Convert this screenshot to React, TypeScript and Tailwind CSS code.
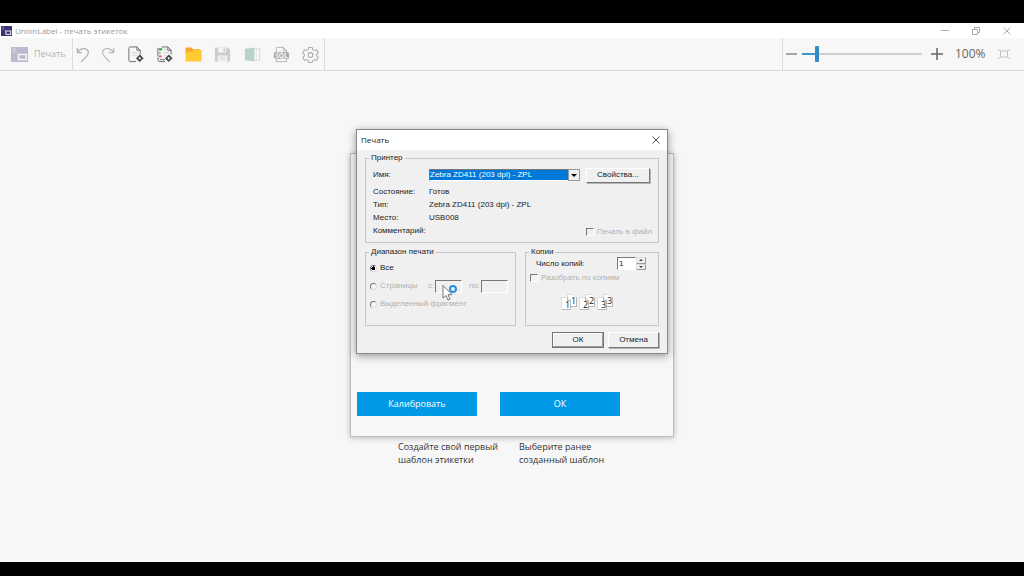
import type { ReactNode } from "react";

function AppMark({ className }: { className: string }) {
  return (
    <svg viewBox="0 0 18 18" preserveAspectRatio="none" className={className} aria-hidden="true">
      <rect width="18" height="18" fill="#3d3270" />
      <path d="M2 2h3v3H2zM0 7h8" fill="#7d75a5" stroke="#6c6399" strokeWidth="1" />
      <rect x="8" y="9" width="8" height="6" fill="#3d3270" stroke="#fff" strokeWidth="1.6" />
    </svg>
  );
}

function Tool({ label, className, children }: { label: string; className: string; children: ReactNode }) {
  return (
    <button type="button" aria-label={label} className={`flex h-8 items-center justify-center ${className}`}>
      <svg width="17" height="17" viewBox="0 0 18 18" fill="none" className="shrink-0" aria-hidden="true">
        {children}
      </svg>
    </button>
  );
}

function Toolbar() {
  return (
    <div className="flex h-[33px] shrink-0 items-stretch border-b border-[#dcdcdc] bg-[#f7f7f7]">
      <button type="button" className="flex w-[72px] items-center gap-[6px] pl-[11px] text-[9px] text-[#b4b4b8]">
        <AppMark className="h-[15px] w-[17px] shrink-0 opacity-30" />
        Печать
      </button>
      <div className="flex border-x border-[#dcdcdc]">
        <Tool label="Отменить" className="w-[20px]">
          <path d="M2.500 2v5h5M2.500 7C5 2.500 12 1 14 5.500C15.500 9.500 10 13 6.500 17" stroke="#b0b0b0" strokeWidth="1.3" />
        </Tool>
        <Tool label="Повторить" className="w-[28px]">
          <path d="M15.500 2v5h-5M15.500 7C13 2.500 6 1 4 5.500C2.500 9.500 8 13 11.500 17" stroke="#bcbcbc" strokeWidth="1.3" />
        </Tool>
        <Tool label="Новый шаблон" className="w-[28px]">
          <path d="M9.500 16.500H3.500Q2 16.500 2 15V2.500Q2 1 3.500 1H10.500L14 4.500V9M10.500 1V4.500H14" stroke="#666" />
          <path d="M5 7h6M5 9.500h6" stroke="#d5d5d5" />
          <path d="M13.500 9.500l3.500 3.500-3.500 3.500L10 13z" fill="#444" stroke="#444" strokeLinejoin="round" />
          <circle cx="13.500" cy="13" r="1.200" fill="#fff" />
        </Tool>
        <Tool label="Новая серия" className="w-[30px]">
          <path d="M9.500 14.500H5Q4 14.500 4 13.500M2 12V14.500Q2 16.500 4 16.500H9.500M6 1H12.500L16 4.500V9M12.500 1V4.500H16M2 2V11" stroke="#666" />
          <path d="M3 3.500h3.500" stroke="#39b54a" strokeWidth="2.500" />
          <path d="M3 7.500h2" stroke="#7ccf86" strokeWidth="2" />
          <path d="M3 11h3" stroke="#ee5555" strokeWidth="2" />
          <path d="M8.500 4h3M7.500 7h6M8.500 10h2" stroke="#ccc" />
          <path d="M13.500 9.500l3.500 3.500-3.500 3.500L10 13z" fill="#444" stroke="#444" strokeLinejoin="round" />
          <circle cx="13.500" cy="13" r="1.200" fill="#fff" />
        </Tool>
        <Tool label="Открыть" className="w-[29px]">
          <path d="M.5 2.500Q.5 1.500 1.500 1.500H7L8.500 3.500H16V8H.5z" fill="#f6a62d" />
          <path d="M.5 6H7.500L9 4H16.500Q17.500 4 17.500 5V15.500Q17.500 16.500 16.500 16.500H1.500Q.5 16.500 .5 15.500z" fill="#fecb35" />
        </Tool>
        <Tool label="Сохранить" className="w-[29px]">
          <path d="M1 1.500H14.500L17 4V16.500H1z" fill="#cbced0" />
          <path d="M4.500 1.500H13V7H4.500zM4 10H14V16.500H4z" fill="#f5f5f5" />
          <path d="M10 2.500h2V6h-2z" fill="#c8cccd" />
          <path d="M5.500 12h7M5.500 14h7" stroke="#d5d8d8" />
        </Tool>
        <Tool label="Таблица" className="w-[30px]">
          <path d="M10 3h6.500v12H10" fill="#f8f8f8" stroke="#cddbd5" />
          <path d="M13 3.500v11" stroke="#e0e8e4" />
          <path d="M1 3L11 1.500V16.500L1 15z" fill="#b9d3c8" />
        </Tool>
        <Tool label="База данных SQL" className="w-[29px]">
          <path d="M3.500 7V2.500Q3.500 1.500 4.500 1.500H11L14.500 5V7M11 1.500V5H14.500M3.500 13V16.500H14.500V13" stroke="#b3b3b3" />
          <rect x="1" y="6.500" width="16" height="7" rx="1.500" fill="#a9a9a9" />
          <text x="9" y="12.500" textAnchor="middle" fontSize="7" fontWeight="700" fill="#f7f7f7" fontFamily="Open Sans, sans-serif">SQL</text>
        </Tool>
        <Tool label="Настройки" className="w-[28px]">
          <path d="M7.200 1.500h3.600l.6 2.300 1.700 1 2.300-.7 1.800 3.100-1.700 1.700v1.500l1.700 1.600-1.800 3.100-2.300-.6-1.700 1-.6 1.900H7.200l-.6-1.900-1.700-1-2.300.6L.8 12l1.700-1.600V8.900L.8 7.200l1.800-3.100 2.300.7 1.700-1z" stroke="#ababab" strokeLinejoin="round" strokeWidth="1.100" />
          <circle cx="9" cy="9.500" r="2.500" stroke="#ababab" strokeWidth="1.100" />
        </Tool>
      </div>
      <div className="ml-auto flex items-center border-l border-[#dcdcdc] pl-[3px] text-[#666]">
        <button type="button" aria-label="Уменьшить" className="w-[16px]">
          <svg width="11" height="12" viewBox="0 0 11 12" aria-hidden="true"><path d="M0 6h11" stroke="#777" strokeWidth="1.300" /></svg>
        </button>
        <input
          type="range"
          aria-label="Масштаб"
          min={0}
          max={100}
          defaultValue={11}
          className="h-4 w-[120px] appearance-none bg-[linear-gradient(to_right,#3d95c9_12%,#cfcfcf_12%)] bg-[length:100%_2px] bg-center bg-no-repeat [&::-webkit-slider-thumb]:h-4 [&::-webkit-slider-thumb]:w-1 [&::-webkit-slider-thumb]:appearance-none [&::-webkit-slider-thumb]:rounded-[1px] [&::-webkit-slider-thumb]:bg-[#2f8cc4]"
        />
        <button type="button" aria-label="Увеличить" className="ml-[9px] w-[24px]">
          <svg width="12" height="12" viewBox="0 0 12 12" aria-hidden="true"><path d="M0 6h12M6 0v12" stroke="#666" strokeWidth="1.500" /></svg>
        </button>
        <span className="w-[43px] text-[12px]">100%</span>
        <button type="button" aria-label="По размеру окна" className="w-[26px]">
          <svg width="12" height="10" viewBox="0 0 12 10" fill="none" stroke="#c3c3c3" aria-hidden="true">
            <rect x="2.500" y="2" width="7" height="6" />
            <path d="M0 .5l2.500 1.500M12 .5L9.500 2M0 9.500L2.500 8M12 9.500L9.500 8" />
          </svg>
        </button>
      </div>
    </div>
  );
}

function Group({ title, className, children }: { title: string; className: string; children: ReactNode }) {
  return (
    <fieldset className={`border border-[#c6c6c6] ${className}`}>
      <legend className="ml-[3px] h-[10px] px-[2px]">{title}</legend>
      {children}
    </fieldset>
  );
}

const raised = "border border-t-white border-l-white border-r-[#777] border-b-[#777] bg-[#f0f0f0] shadow-[1px_1px_0_#b5b5b5]";
const sunken = "border border-t-[#777] border-l-[#777] border-r-white border-b-white";
const box = `${sunken} h-2 w-2 shrink-0 appearance-none bg-[#f0f0f0]`;
const radio =
  "h-[7px] w-[7px] shrink-0 appearance-none rounded-full border border-t-[#777] border-l-[#777] border-r-[#ddd] border-b-[#ddd] bg-[#f8f8f8] checked:bg-[radial-gradient(circle,#000_2px,#fff_2px)]";

function Row({ name, value }: { name: string; value: string }) {
  return (
    <div className="flex h-[13px] items-center">
      <dt className="w-[56px]">{name}</dt>
      <dd>{value}</dd>
    </div>
  );
}

function Copies() {
  return (
    <svg width="54" height="17" viewBox="0 0 54 17" className="ml-[35px] mt-[11px]" aria-hidden="true">
      {[1, 2, 3].map((n) => (
        <g key={n} transform={`translate(${(n - 1) * 18} 0)`} fontFamily="Open Sans, sans-serif" fontSize="9" fill="#222">
          <path d="M6.500 .5H12.500L15.500 3.500V12.500H6.500z" fill="#fff" stroke="#dcdcdc" />
          <path d="M15.500 3.500V12.500H10" fill="none" stroke="#b5b5b5" />
          <text x="10" y="10">{n}</text>
          <path d="M.5 3.500H6.500L9.500 6.500V15.500H.5z" fill="#fff" stroke="#dcdcdc" />
          <path d="M6.500 3.500V6.500H9.500V15.500H1" fill="none" stroke="#b5b5b5" />
          <text x="4" y="14">{n}</text>
        </g>
      ))}
    </svg>
  );
}

function PrintDialog() {
  return (
    <section role="dialog" aria-labelledby="print-title" className="w-[312px] border border-[#8a8a8a] bg-[#f0f0f0] font-['Liberation_Sans',sans-serif] text-[8px] leading-[10px] text-[#222] shadow-[0_2px_8px_rgba(0,0,0,0.4)]">
      <header className="flex h-[20px] items-center justify-between bg-white pl-[4px] pr-[7px] font-['Open_Sans',sans-serif]">
        <h2 id="print-title">Печать</h2>
        <button type="button" aria-label="Закрыть">
          <svg width="8" height="8" viewBox="0 0 8 8" aria-hidden="true"><path d="M.5.5l7 7M7.500.5l-7 7" stroke="#333" strokeWidth=".9" /></svg>
        </button>
      </header>
      <form className="px-2 pb-[5px] pt-[3px]" onSubmit={(e) => e.preventDefault()}>
        <Group title="Принтер" className="h-[90px]">
          <div className="mt-[4px] flex h-[16px] items-center pl-[7px]">
            <label htmlFor="printer" className="w-[56px]">Имя:</label>
            <div className="relative flex w-[151px]">
              <select id="printer" className={`${sunken} h-[12px] w-full appearance-none bg-[#0078d7] pr-3 text-[8px] leading-[10px] text-white`}>
                <option>Zebra ZD411 (203 dpi) - ZPL</option>
              </select>
              <span className="pointer-events-none absolute right-0 top-0 flex h-[12px] w-[12px] items-center justify-center border border-[#999] bg-[#f0f0f0]">
                <svg width="6" height="3" viewBox="0 0 6 3" aria-hidden="true"><path d="M0 0h6L3 3z" /></svg>
              </span>
            </div>
            <button type="button" className={`${raised} ml-[6px] h-[15px] w-[64px]`}>Свойства...</button>
          </div>
          <div className="mt-[2px] flex items-end justify-between px-[7px]">
            <dl>
              <Row name="Состояние:" value="Готов" />
              <Row name="Тип:" value="Zebra ZD411 (203 dpi) - ZPL" />
              <Row name="Место:" value="USB008" />
              <Row name="Комментарий:" value="" />
            </dl>
            <label className="flex w-[65px] items-center gap-[3px] whitespace-nowrap text-[#b0b0b0]">
              <input type="checkbox" disabled className={box} />Печать в файл
            </label>
          </div>
        </Group>
        <div className="mt-[4px] flex justify-between">
          <Group title="Диапазон печати" className="h-[79px] w-[151px]">
            <div className="mt-[2px] flex h-[18px] items-center pl-[4px]">
              <label className="flex items-center gap-[3px]"><input type="radio" name="range" defaultChecked className={radio} />Все</label>
            </div>
            <div className="flex h-[18px] items-center pl-[4px] text-[#b0b0b0]">
              <label className="flex w-[58px] items-center gap-[3px]"><input type="radio" name="range" disabled className={radio} />Страницы</label>
              <label htmlFor="from" className="w-[7px]">с:</label>
              <input id="from" disabled className={`${sunken} h-[13px] w-[27px]`} />
              <label htmlFor="to" className="ml-[7px] w-[12px]">по:</label>
              <input id="to" disabled className={`${sunken} h-[13px] w-[27px]`} />
            </div>
            <div className="flex h-[18px] items-center pl-[4px] text-[#b0b0b0]">
              <label className="flex items-center gap-[3px]"><input type="radio" name="range" disabled className={radio} />Выделенный фрагмент</label>
            </div>
          </Group>
          <Group title="Копии" className="h-[79px] w-[134px]">
            <div className="flex h-[13px] items-center pl-[10px]">
              <label htmlFor="copies" className="w-[81px]">Число копий:</label>
              <div className="flex">
                <input id="copies" defaultValue="1" inputMode="numeric" className={`${sunken} h-[13px] w-[19px] bg-white pl-[1px]`} />
                <span className="flex w-[10px] flex-col">
                  {["Больше", "Меньше"].map((name, i) => (
                    <button key={name} type="button" aria-label={name} className="flex flex-1 items-center justify-center border border-[#999] border-l-[#ddd] border-t-[#ddd]">
                      <svg width="4" height="2" viewBox="0 0 4 2" fill="#444" aria-hidden="true"><path d={i ? "M0 0h4L2 2z" : "M0 2h4L2 0z"} /></svg>
                    </button>
                  ))}
                </span>
              </div>
            </div>
            <label className="mt-[3px] flex items-center gap-[3px] pl-[4px] text-[#b0b0b0]">
              <input type="checkbox" disabled className={box} />Разобрать по копиям
            </label>
            <Copies />
          </Group>
        </div>
        <div className="mt-[6px] flex justify-end gap-[4px]">
          <button type="submit" className="h-[16px] w-[52px] border border-[#777] bg-[#f0f0f0] shadow-[inset_-1px_-1px_0_#999,inset_1px_1px_0_#fff]">ОК</button>
          <button type="button" className={`${raised} h-[16px] w-[51px]`}>Отмена</button>
        </div>
      </form>
    </section>
  );
}

export default function App() {
  return (
    <div className="flex h-screen flex-col bg-black pb-[14px] pt-[23px] font-['Open_Sans','Noto_Sans',sans-serif]">
      <header className="flex h-[15px] shrink-0 items-center bg-white pl-[1px]">
        <AppMark className="mr-[3px] h-[10px] w-[11px]" />
        <h1 className="text-[8px] text-[#999]">UnionLabel - печать этикеток</h1>
        <div className="ml-auto flex items-center gap-[23px] pr-[13px] text-[#aaa]">
          <button type="button" aria-label="Свернуть"><svg width="8" height="8" viewBox="0 0 8 8" stroke="currentColor" aria-hidden="true"><path d="M0 3.500h8" /></svg></button>
          <button type="button" aria-label="Восстановить"><svg width="8" height="8" viewBox="0 0 8 8" fill="none" stroke="currentColor" aria-hidden="true"><path d="M.5 2.500h5v5h-5zM2.500 2.500v-2h5v5h-2" /></svg></button>
          <button type="button" aria-label="Закрыть"><svg width="8" height="8" viewBox="0 0 8 8" stroke="currentColor" aria-hidden="true"><path d="M.5.5l7 7M7.500.5l-7 7" /></svg></button>
        </div>
      </header>
      <Toolbar />
      <main className="relative flex min-h-0 flex-1 flex-col items-center bg-[#f7f7f7] pt-[369px]">
        <div className="grid w-[228px] grid-cols-[121px_107px] text-[9px] leading-[13px] text-[#333]">
          <p>Создайте свой первый<br />шаблон этикетки</p>
          <p>Выберите ранее<br />созданный шаблон</p>
        </div>
        <div className="absolute inset-x-0 top-[82px] flex justify-center">
          <section className="flex h-[284px] w-[324px] items-end gap-[23px] border border-[#bcbcbc] bg-[#f7f7f7] pb-[20px] pl-[6px] text-[9px] text-white shadow-[0_1px_6px_rgba(0,0,0,0.25)]">
            <button type="button" className="h-[24px] w-[120px] bg-[#0099e5]">Калибровать</button>
            <button type="button" className="h-[24px] w-[120px] bg-[#0099e5]">ОК</button>
          </section>
        </div>
        <div className="absolute inset-x-0 top-[58px] flex justify-center">
          <div className="relative">
            <PrintDialog />
            <svg width="18" height="18" viewBox="0 0 18 18" className="pointer-events-none absolute left-[86px] top-[155px]" aria-hidden="true">
              <path d="M1 1.500V14l3-2.500 2 4.500 2-.9-2-4.400h4z" fill="#fff" stroke="#555" strokeWidth=".8" />
              <circle cx="11" cy="5" r="3" fill="#e8f4fd" stroke="#2b8fdc" strokeWidth="2" />
            </svg>
          </div>
        </div>
      </main>
    </div>
  );
}
